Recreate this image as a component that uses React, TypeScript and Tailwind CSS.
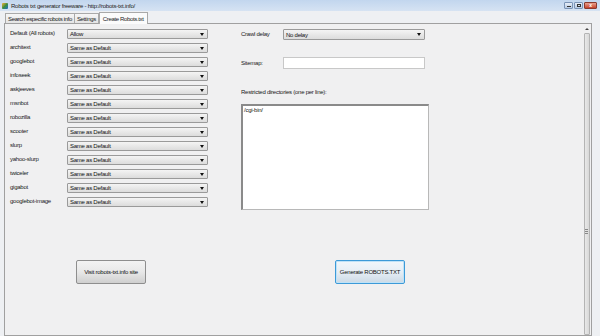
import React from 'react';

const robots = [
  'architext',
  'googlebot',
  'infoseek',
  'askjeeves',
  'msnbot',
  'robozilla',
  'scooter',
  'slurp',
  'yahoo-slurp',
  'twiceler',
  'gigabot',
  'googlebot-image',
];

function Select({ value, className = '' }: { value: string; className?: string }) {
  return (
    <div className={`relative flex h-[10px] items-center rounded-[1px] border border-[#9a9a9a] bg-gradient-to-b from-[#f4f4f4] to-[#dcdcdc] pl-[2px] ${className}`}>
      <span className="leading-none text-[#111]">{value}</span>
      <span className="absolute right-[3px] top-[3px] h-0 w-0 border-x-[2px] border-t-[3px] border-x-transparent border-t-[#111]" />
    </div>
  );
}

export default function App() {
  return (
    <div className="flex h-[336px] w-[600px] flex-col overflow-hidden bg-[#eef0f3] text-[6px] tracking-[-0.25px] text-[#1a1a1a]" style={{ fontFamily: '"Liberation Sans", Arial, sans-serif' }}>
      {/* title bar */}
      <div className="flex h-[11px] items-center bg-gradient-to-b from-[#c2d6ee] to-[#d6e3f3] pl-[2px]">
        <div className="mr-[3px] h-[6px] w-[6px] rounded-[1px] bg-gradient-to-br from-[#f0b030] via-[#3c8c3c] to-[#2c64c8]" />
        <span className="leading-none text-[#222]">Robots txt generator freeware - http://robots-txt.info/</span>
        <div className="ml-auto mr-[3px] flex gap-[1px]">
          <div className="flex h-[7px] w-[9px] items-end justify-center rounded-[1px] border border-[#7b93b5] bg-gradient-to-b from-[#e8eef7] to-[#b9cbe3] pb-[1px]">
            <div className="h-[1px] w-[4px] bg-[#333]" />
          </div>
          <div className="flex h-[7px] w-[9px] items-center justify-center rounded-[1px] border border-[#7b93b5] bg-gradient-to-b from-[#e8eef7] to-[#b9cbe3]">
            <div className="h-[3px] w-[4px] border border-[#333]" />
          </div>
          <div className="flex h-[7px] w-[13px] items-center justify-center rounded-[1px] border border-[#8a3a2e] bg-gradient-to-b from-[#e9a08e] to-[#c4402a] text-[5px] font-bold leading-none text-white">x</div>
        </div>
      </div>

      {/* tabs */}
      <div className="flex h-[12px] items-end pl-[5px] pt-[1px] tracking-[-0.35px]">
        <div className="flex h-[10px] items-center border border-b-0 border-[#a9a9a9] bg-gradient-to-b from-[#f6f6f6] to-[#e4e4e4] px-[2px] leading-none">Search especific robots info</div>
        <div className="flex h-[10px] items-center border border-b-0 border-l-0 border-[#a9a9a9] bg-gradient-to-b from-[#f6f6f6] to-[#e4e4e4] px-[2px] leading-none">Settings</div>
        <div className="relative top-[1px] flex h-[12px] items-center border border-b-0 border-[#a9a9a9] bg-[#fbfbfb] px-[3px] leading-none">Create Robots.txt</div>
      </div>

      {/* panel */}
      <div className="ml-[4px] mr-[8px] flex flex-1 border border-[#a0a0a0] bg-[#f0f0f1]">
        <div className="flex flex-1 flex-col pl-[5px] pt-[5px]">
          <div className="flex">
            <div className="flex w-[198px] flex-col gap-[4px]">
              <div className="flex items-start">
                <span className="mt-[1px] w-[57px] leading-none">Default (All robots)</span>
                <Select value="Allow" className="w-[141px]" />
              </div>
              {robots.map((r) => (
                <div key={r} className="flex items-start">
                  <span className="mt-[1px] w-[57px] leading-none">{r}</span>
                  <Select value="Same as Default" className="w-[141px]" />
                </div>
              ))}
            </div>

            <div className="ml-[33px] flex flex-col">
              <div className="flex items-start">
                <span className="mt-[2px] w-[42px] leading-none">Crawl delay</span>
                <Select value="No delay" className="h-[11px] w-[142px]" />
              </div>
              <div className="mt-[17px] flex items-start">
                <span className="mt-[3px] w-[42px] leading-none">Sitemap:</span>
                <div className="h-[12px] w-[142px] border border-[#c8c8c8] bg-white" />
              </div>
              <span className="mt-[20px] leading-none">Restricted directories (one per line):</span>
              <div className="mt-[9px] h-[106px] w-[188px] border border-t-2 border-l-2 border-[#b8b8b8] border-l-[#8a8a8a] border-t-[#8a8a8a] bg-white pl-[1px] pt-[1px] leading-none">/cgi-bin/</div>
            </div>
          </div>

          <div className="mt-[50px] flex">
            <button className="ml-[66px] flex h-[24px] w-[70px] items-center justify-center rounded-[2px] border border-[#8e8e8e] bg-gradient-to-b from-[#f3f3f3] via-[#e8e8e8] to-[#cfcfcf] text-[6px] leading-none text-[#111]">Visit robots-txt.info site</button>
            <button className="ml-[189px] flex h-[24px] w-[70px] items-center justify-center rounded-[2px] border border-[#3c9ad8] bg-gradient-to-b from-[#f1f7fb] via-[#e6eef5] to-[#cbd9e5] text-[6px] leading-none text-[#111] shadow-[inset_0_0_0_1px_#bfe2f7]">Generate ROBOTS.TXT</button>
          </div>
        </div>

        {/* scrollbar */}
        <div className="mr-[1px] mt-[2px] flex w-[7px] flex-col items-center">
          <div className="flex h-[5px] w-[7px] items-center justify-center">
            <span className="h-0 w-0 border-x-[2px] border-b-[2px] border-x-transparent border-b-[#444]" />
          </div>
          <div className="mt-[2px] flex w-[6px] flex-1 flex-col items-center rounded-[1px] border border-[#b4b4b4] bg-gradient-to-r from-[#e8e8e8] to-[#d8d8d8]">
            <div className="mt-[195px] flex flex-col gap-[1px]">
              <div className="h-[1px] w-[3px] bg-[#888]" />
              <div className="h-[1px] w-[3px] bg-[#888]" />
              <div className="h-[1px] w-[3px] bg-[#888]" />
            </div>
          </div>
        </div>
      </div>
    </div>
  );
}
